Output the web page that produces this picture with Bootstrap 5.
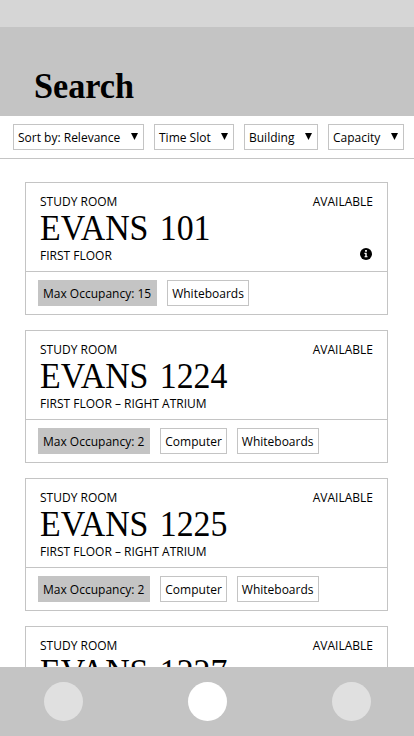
<!DOCTYPE html>
<html lang="en">
<head>
<meta charset="utf-8">
<meta name="viewport" content="width=device-width, initial-scale=1">
<title>Search</title>
<link href="https://cdn.jsdelivr.net/npm/bootstrap@5.3.0/dist/css/bootstrap.min.css" rel="stylesheet">
<style>
  :root { --tone: #c4c4c4; }
  body { font-family: "Open Sans", sans-serif; font-size: 12px; line-height: 16px; color: #000; }
  .status-strip { height: 27px; background: #d6d6d6; }
  .page-head { height: 89px; background: var(--tone); padding: 0 34px 10px; }
  .page-head h1, .room-name { font-family: "Liberation Serif", serif; white-space: nowrap; transform-origin: left center; }
  .page-head h1 { font-size: 36px; line-height: 40px; font-weight: 700; transform: scaleX(.95); }
  .filters { height: 43px; padding: 8px 10px 8px 13px; gap: 10px; border-bottom: 1px solid var(--tone); }
  .filters .btn, .tag { height: 26px; font-size: 12px; line-height: 16px; padding: 2px 4px 0; border: 1px solid var(--tone); border-radius: 0; color: #000; background: #fff; white-space: nowrap; }
  .filters .btn svg { width: 7px; height: 7px; margin: 0 1px 3px 0; }
  .f-sort { width: 131px; } .f-time { width: 80px; } .f-building { width: 74px; } .f-capacity { width: 76px; }
  .rooms { min-height: 0; padding: 23px 26px 0 25px; gap: 15px; }
  .rooms .card { height: 133px; border: 1px solid var(--tone); border-radius: 0; color: #000; }
  .rooms .card-body { height: 89px; flex: none; padding: 11px 14px 0; border-bottom: 1px solid var(--tone); }
  .room-name { font-size: 36px; line-height: 36px; margin: 0 0 2px; word-spacing: 3px; transform: scaleX(.94); }
  .rooms .tags { padding: 8px 12px; gap: 10px; }
  .rooms .tag.filled { background: var(--tone); padding-right: 5px; }
  .info-icon { width: 12px; height: 12px; margin: 0 1px 4px 0; }
  .tab-strip { height: 69px; padding: 0 43px 0 44px; background: var(--tone); }
  .tab-dot { width: 39px; height: 39px; padding: 0; border: 0; border-radius: 50%; background: #e0e0e0; }
  .tab-dot.current { background: #fff; }
</style>
<script src="https://cdn.jsdelivr.net/npm/bootstrap@5.3.0/dist/js/bootstrap.bundle.min.js"></script>
</head>
<body class="vh-100 d-flex flex-column overflow-hidden bg-white">
<div class="status-strip flex-shrink-0"></div>
<header class="page-head flex-shrink-0 d-flex align-items-end"><h1 class="m-0">Search</h1></header>
<div class="filters flex-shrink-0 d-flex">
  <button class="btn f-sort d-flex align-items-center justify-content-between">Sort by: Relevance<svg viewBox="0 0 7 7"><path d="M0 0h7L3.5 7z"/></svg></button>
  <button class="btn f-time d-flex align-items-center justify-content-between">Time Slot<svg viewBox="0 0 7 7"><path d="M0 0h7L3.5 7z"/></svg></button>
  <button class="btn f-building d-flex align-items-center justify-content-between">Building<svg viewBox="0 0 7 7"><path d="M0 0h7L3.5 7z"/></svg></button>
  <button class="btn f-capacity d-flex align-items-center justify-content-between">Capacity<svg viewBox="0 0 7 7"><path d="M0 0h7L3.5 7z"/></svg></button>
</div>
<main class="rooms flex-grow-1 overflow-hidden d-flex flex-column">
  <article class="card flex-shrink-0">
    <div class="card-body">
      <div class="d-flex justify-content-between"><span>STUDY ROOM</span><span>AVAILABLE</span></div>
      <h2 class="room-name fw-normal">EVANS 101</h2>
      <div class="d-flex justify-content-between align-items-end"><span>FIRST FLOOR</span>
        <svg class="info-icon" viewBox="0 0 12 12" role="img" aria-label="Room information"><circle cx="6" cy="6" r="6"/><path fill="#fff" d="M5.1 2.1h1.8v1.7H5.1zM4.4 4.8h2.3v3.4h.8v1.1h-3V8.2h.8V5.9h-.9z"/></svg>
      </div>
    </div>
    <div class="tags d-flex"><span class="tag filled d-flex align-items-center">Max Occupancy: 15</span><span class="tag d-flex align-items-center">Whiteboards</span></div>
  </article>
  <article class="card flex-shrink-0">
    <div class="card-body">
      <div class="d-flex justify-content-between"><span>STUDY ROOM</span><span>AVAILABLE</span></div>
      <h2 class="room-name fw-normal">EVANS 1224</h2>
      <div>FIRST FLOOR – RIGHT ATRIUM</div>
    </div>
    <div class="tags d-flex"><span class="tag filled d-flex align-items-center">Max Occupancy: 2</span><span class="tag d-flex align-items-center">Computer</span><span class="tag d-flex align-items-center">Whiteboards</span></div>
  </article>
  <article class="card flex-shrink-0">
    <div class="card-body">
      <div class="d-flex justify-content-between"><span>STUDY ROOM</span><span>AVAILABLE</span></div>
      <h2 class="room-name fw-normal">EVANS 1225</h2>
      <div>FIRST FLOOR – RIGHT ATRIUM</div>
    </div>
    <div class="tags d-flex"><span class="tag filled d-flex align-items-center">Max Occupancy: 2</span><span class="tag d-flex align-items-center">Computer</span><span class="tag d-flex align-items-center">Whiteboards</span></div>
  </article>
  <article class="card flex-shrink-0">
    <div class="card-body">
      <div class="d-flex justify-content-between"><span>STUDY ROOM</span><span>AVAILABLE</span></div>
      <h2 class="room-name fw-normal">EVANS 1227</h2>
    </div>
  </article>
</main>
<nav class="tab-strip flex-shrink-0 d-flex align-items-center justify-content-between">
  <button class="tab-dot" aria-label="First tab"></button>
  <button class="tab-dot current" aria-label="Search tab"></button>
  <button class="tab-dot" aria-label="Third tab"></button>
</nav>
</body>
</html>
